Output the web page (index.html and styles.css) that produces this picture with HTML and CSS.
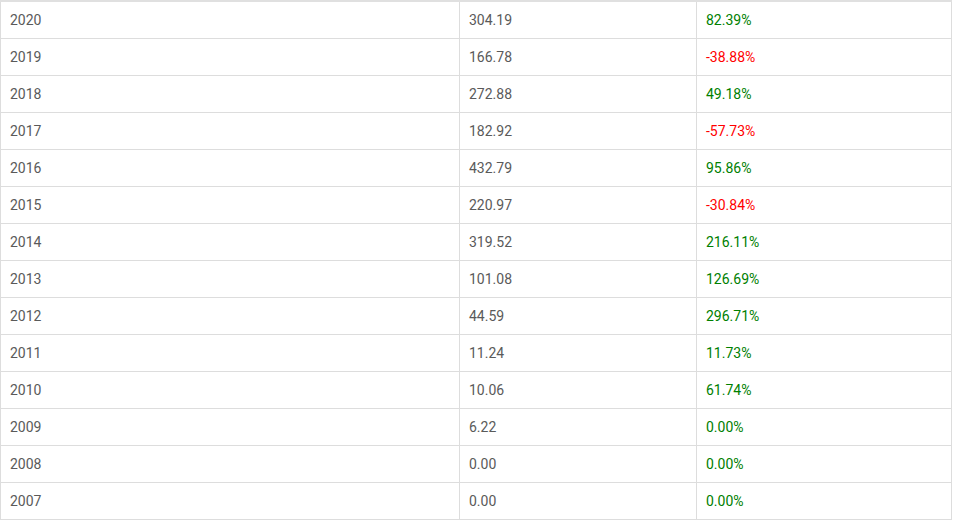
FILE: index.html
```html
<!DOCTYPE html>
<html>
<head>
<meta charset="utf-8">
<link rel="stylesheet" href="styles.css">
</head>
<body>
<table class="perf">
  <colgroup><col class="c1"><col class="c2"><col class="c3"></colgroup>
  <tbody>
    <tr><td>2020</td><td>304.19</td><td class="up">82.39%</td></tr>
    <tr><td>2019</td><td>166.78</td><td class="down">-38.88%</td></tr>
    <tr><td>2018</td><td>272.88</td><td class="up">49.18%</td></tr>
    <tr><td>2017</td><td>182.92</td><td class="down">-57.73%</td></tr>
    <tr><td>2016</td><td>432.79</td><td class="up">95.86%</td></tr>
    <tr><td>2015</td><td>220.97</td><td class="down">-30.84%</td></tr>
    <tr><td>2014</td><td>319.52</td><td class="up">216.11%</td></tr>
    <tr><td>2013</td><td>101.08</td><td class="up">126.69%</td></tr>
    <tr><td>2012</td><td>44.59</td><td class="up">296.71%</td></tr>
    <tr><td>2011</td><td>11.24</td><td class="up">11.73%</td></tr>
    <tr><td>2010</td><td>10.06</td><td class="up">61.74%</td></tr>
    <tr><td>2009</td><td>6.22</td><td class="up">0.00%</td></tr>
    <tr><td>2008</td><td>0.00</td><td class="up">0.00%</td></tr>
    <tr><td>2007</td><td>0.00</td><td class="up">0.00%</td></tr>
  </tbody>
</table>
</body>
</html>
```

FILE: styles.css
```css
html, body { margin: 0; padding: 0; background: #fff; }
body { font-family: Roboto, "Liberation Sans", sans-serif; font-size: 14px; color: #5a5a5a; }
.perf {
  border-collapse: collapse;
  table-layout: fixed;
  width: 951px;
  border-top: 2px solid #e0e0e0;
}
.c1 { width: 459px; }
.c2 { width: 237px; }
.c3 { width: 255px; }
.perf td {
  border: 1px solid #ddd;
  height: 37px;
  padding: 0 0 0 9px;
  box-sizing: border-box;
  vertical-align: middle;
  line-height: 16px;
}
.perf tr:first-child td { border-top: 2px solid #e0e0e0; }
.up { color: #008000; }
.down { color: #ff0000; }
```
